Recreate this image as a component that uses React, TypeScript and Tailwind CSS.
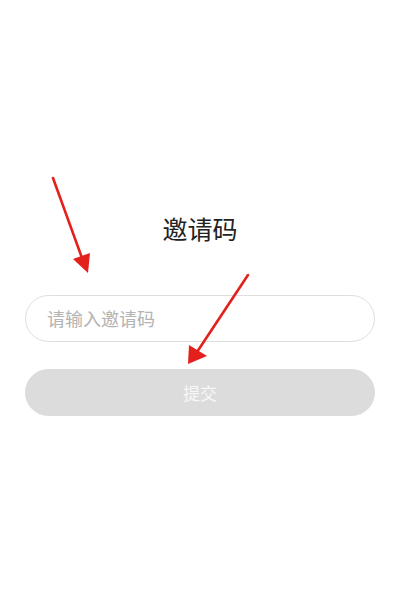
export default function App() {
  return (
    <div
      className="relative w-[400px] h-[600px] bg-white overflow-hidden"
      style={{ fontFamily: '"Noto Sans CJK SC", "Noto Sans", sans-serif' }}
    >
      <div className="flex flex-col items-center px-[25px] pt-[213px]">
        <h1 className="h-[30px] leading-[30px] text-[25px] text-[#222222] font-normal">邀请码</h1>
        <div className="mt-[52px] w-full h-[47px] rounded-full border border-[#dedede] flex items-center px-[21px]">
          <input
            className="w-full bg-transparent outline-none text-[18px] text-[#333] placeholder:text-[#b3b3b3]"
            placeholder="请输入邀请码"
          />
        </div>
        <button className="mt-[27px] w-full h-[47px] rounded-full bg-[#dcdcdc] text-[17px] text-[#f7f7f7]">
          提交
        </button>
      </div>

      {/* annotation arrows */}
      <svg className="absolute inset-0 pointer-events-none" width="400" height="600">
        <line x1="53" y1="178" x2="82" y2="258" stroke="#e3201b" strokeWidth="2.6" strokeLinecap="round" />
        <polygon points="88,273 73,259 90,253" fill="#e3201b" />
        <line x1="248" y1="275" x2="197" y2="352" stroke="#e3201b" strokeWidth="2.6" strokeLinecap="round" />
        <polygon points="188,364 189,345 207,356" fill="#e3201b" />
      </svg>
    </div>
  );
}
